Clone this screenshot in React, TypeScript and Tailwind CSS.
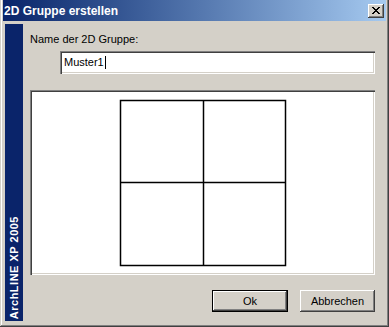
const raised =
  "shadow-[inset_-1px_-1px_#404040,inset_1px_1px_#ffffff,inset_-2px_-2px_#808080,inset_2px_2px_#d4d0c8]";
const sunken =
  "shadow-[inset_1px_1px_#808080,inset_2px_2px_#404040,inset_-1px_-1px_#ffffff,inset_-2px_-2px_#d4d0c8]";

function CloseButton() {
  return (
    <div className={`flex h-[14px] w-[16px] items-center justify-center bg-[#d4d0c8] ${raised}`}>
      <svg width="8" height="7" viewBox="0 0 8 7" shapeRendering="crispEdges">
        <path d="M0 0h2v1h-2zM6 0h2v1h-2zM1 1h2v1h-2zM5 1h2v1h-2zM2 2h4v1h-4zM3 3h2v1h-2zM2 4h4v1h-4zM1 5h2v1h-2zM5 5h2v1h-2zM0 6h2v1h-2zM6 6h2v1h-2z" fill="#000" />
      </svg>
    </div>
  );
}

function Button({ label, primary }: { label: string; primary?: boolean }) {
  if (primary) {
    return (
      <div className="h-[22px] w-[76px] border border-black">
        <div className={`flex h-full w-full items-center justify-center bg-[#d4d0c8] text-[11px] text-black ${raised}`}>
          {label}
        </div>
      </div>
    );
  }
  return (
    <div className={`flex h-[22px] w-[75px] items-center justify-center bg-[#d4d0c8] text-[11px] text-black ${raised}`}>
      {label}
    </div>
  );
}

export default function App() {
  return (
    <div
      className="flex h-[327px] w-[389px] flex-col bg-[#d4d0c8] shadow-[inset_-1px_-1px_#404040,inset_1px_0_#d4d0c8,inset_-2px_-2px_#808080,inset_2px_0_#ffffff] select-none"
      style={{ fontFamily: '"Liberation Sans", Arial, sans-serif' }}
    >
      <div className="mx-[3px] flex h-[21px] items-center justify-between bg-gradient-to-r from-[#0a246a] to-[#a6caf0] pl-[1px] pr-[2px]">
        <span className="text-[12px] font-bold text-white">2D Gruppe erstellen</span>
        <CloseButton />
      </div>

      <div className="flex flex-1 pb-[6px] pl-[5px] pr-[14px] pt-[3px]">
        <div className="flex w-[18px] flex-col items-center justify-end bg-[#0a246a] pb-[2px]">
          <span className="rotate-180 text-[11px] font-bold leading-[18px] tracking-[0.5px] text-white [writing-mode:vertical-rl]">
            ArchLINE XP 2005
          </span>
        </div>

        <div className="ml-[7px] flex flex-1 flex-col">
          <div className="mt-[9px] h-[13px] text-[11px] leading-[13px] text-black">Name der 2D Gruppe:</div>
          <div className={`ml-[30px] mt-[5px] flex h-[23px] items-center bg-white pl-[4px] text-[11px] text-black ${sunken}`}>
            Muster1<span className="ml-[1px] inline-block h-[13px] w-px bg-black" />
          </div>
          <div className={`mt-[16px] h-[185px] bg-white ${sunken}`}>
            <svg width="345" height="185" viewBox="0 0 345 185">
              <rect x="90.5" y="10.5" width="165" height="165" fill="none" stroke="#000" strokeWidth="1.5" />
              <line x1="173.5" y1="10" x2="173.5" y2="176" stroke="#000" strokeWidth="1.5" />
              <line x1="90" y1="92.5" x2="256" y2="92.5" stroke="#000" strokeWidth="1.5" />
            </svg>
          </div>
          <div className="mt-[15px] flex justify-end gap-[12px]">
            <Button label="Ok" primary />
            <Button label="Abbrechen" />
          </div>
        </div>
      </div>
    </div>
  );
}
